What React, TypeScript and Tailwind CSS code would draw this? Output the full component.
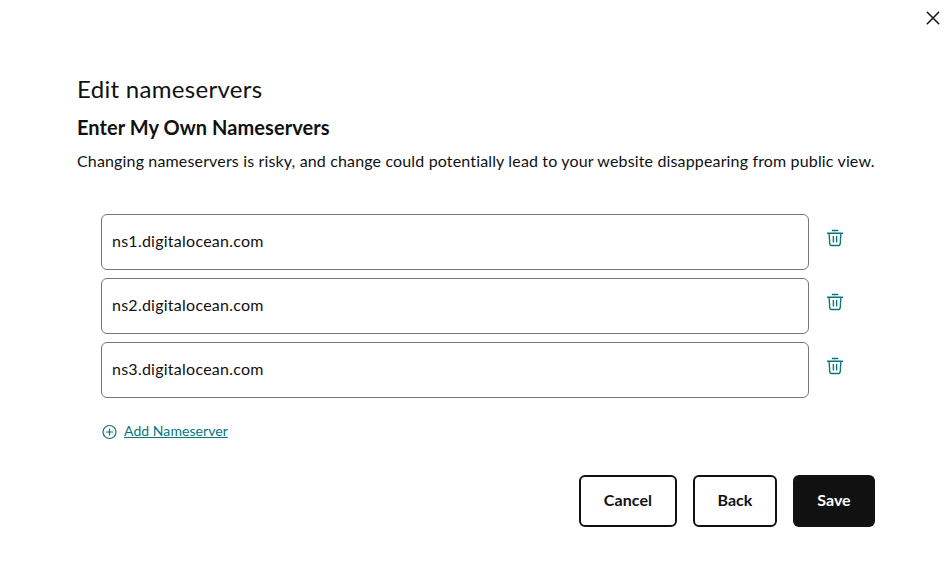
import { useState } from "react";

function TrashIcon() {
  return (
    <svg className="block" width="18" height="18" viewBox="0 0 18 18" fill="none" stroke="#09757a" strokeWidth="1.35" strokeLinecap="round" strokeLinejoin="round">
      <path d="M6.3 1.5h5.4M1.5 4.2h15M3.1 4.4l.7 10.5a1.7 1.7 0 0 0 1.7 1.6h7a1.7 1.7 0 0 0 1.7-1.6l.7-10.5M7.4 7.5v5.4M10.6 7.5v5.4" />
    </svg>
  );
}

function PlusIcon() {
  return (
    <svg className="block" width="16" height="16" viewBox="0 0 16 16" fill="none" stroke="#09757a" strokeWidth="1.2" strokeLinecap="round">
      <circle cx="7.5" cy="8" r="6.5" />
      <path d="M7.5 5v6M4.5 8h6" />
    </svg>
  );
}

export default function App() {
  const [servers, setServers] = useState([
    "ns1.digitalocean.com",
    "ns2.digitalocean.com",
    "ns3.digitalocean.com",
  ]);

  return (
    <main className="h-[570px] w-[951px] overflow-hidden bg-white font-['Lato',sans-serif] text-[#111]">
      <div className="flex h-9 items-end justify-end pr-[10px]">
        <button aria-label="Close" className="mb-[10px]">
          <svg className="block" width="16" height="16" viewBox="0 0 16 16" stroke="#111" strokeWidth="1.5" strokeLinecap="round">
            <path d="M2.3 2.3l11.4 11.4M13.7 2.3L2.3 13.7" />
          </svg>
        </button>
      </div>
      <div className="ml-[77px] flex w-[798px] flex-col pt-[37px]">
        <h1 className="h-8 text-2xl leading-8 tracking-[0.3px]">Edit nameservers</h1>
        <h2 className="mt-2 h-7 text-xl leading-7 font-bold tracking-[0.06px]">Enter My Own Nameservers</h2>
        <p className="mt-2 h-6 text-base leading-6 tracking-[0.152px] whitespace-nowrap">
          Changing nameservers is risky, and change could potentially lead to your website disappearing from public view.
        </p>

        <div className="mt-[41px] ml-6 flex flex-col gap-2">
          {servers.map((server, index) => (
            <div key={index} className="flex h-14 items-start">
              <input
                aria-label={`Nameserver ${index + 1}`}
                value={server}
                onChange={(e) => setServers(servers.map((s, i) => (i === index ? e.target.value : s)))}
                className="h-14 w-[708px] rounded-md border border-[#767676] px-[10px] pb-[3px] text-base tracking-[0.25px] outline-none"
              />
              <button aria-label="Delete" className="mt-[15px] ml-[17px]">
                <TrashIcon />
              </button>
            </div>
          ))}
        </div>

        <button onClick={() => setServers([...servers, ""])} className="mt-6 ml-6 flex h-5 items-center self-start text-[#09757a]">
          <span className="ml-[1px]"><PlusIcon /></span>
          <span className="ml-[6px] pb-[2px] text-sm leading-5 tracking-[0.06px] whitespace-nowrap underline">Add Nameserver</span>
        </button>

        <div className="mt-[33px] flex justify-end gap-4 text-base font-bold">
          <button className="h-[52px] w-[98px] rounded-md border-2 border-[#111] pb-[2px] tracking-[0.1px]">Cancel</button>
          <button className="h-[52px] w-[84px] rounded-md border-2 border-[#111] pb-[2px]">Back</button>
          <button className="h-[52px] w-[82px] rounded-md bg-[#111] pb-[2px] text-white">Save</button>
        </div>
      </div>
    </main>
  );
}
